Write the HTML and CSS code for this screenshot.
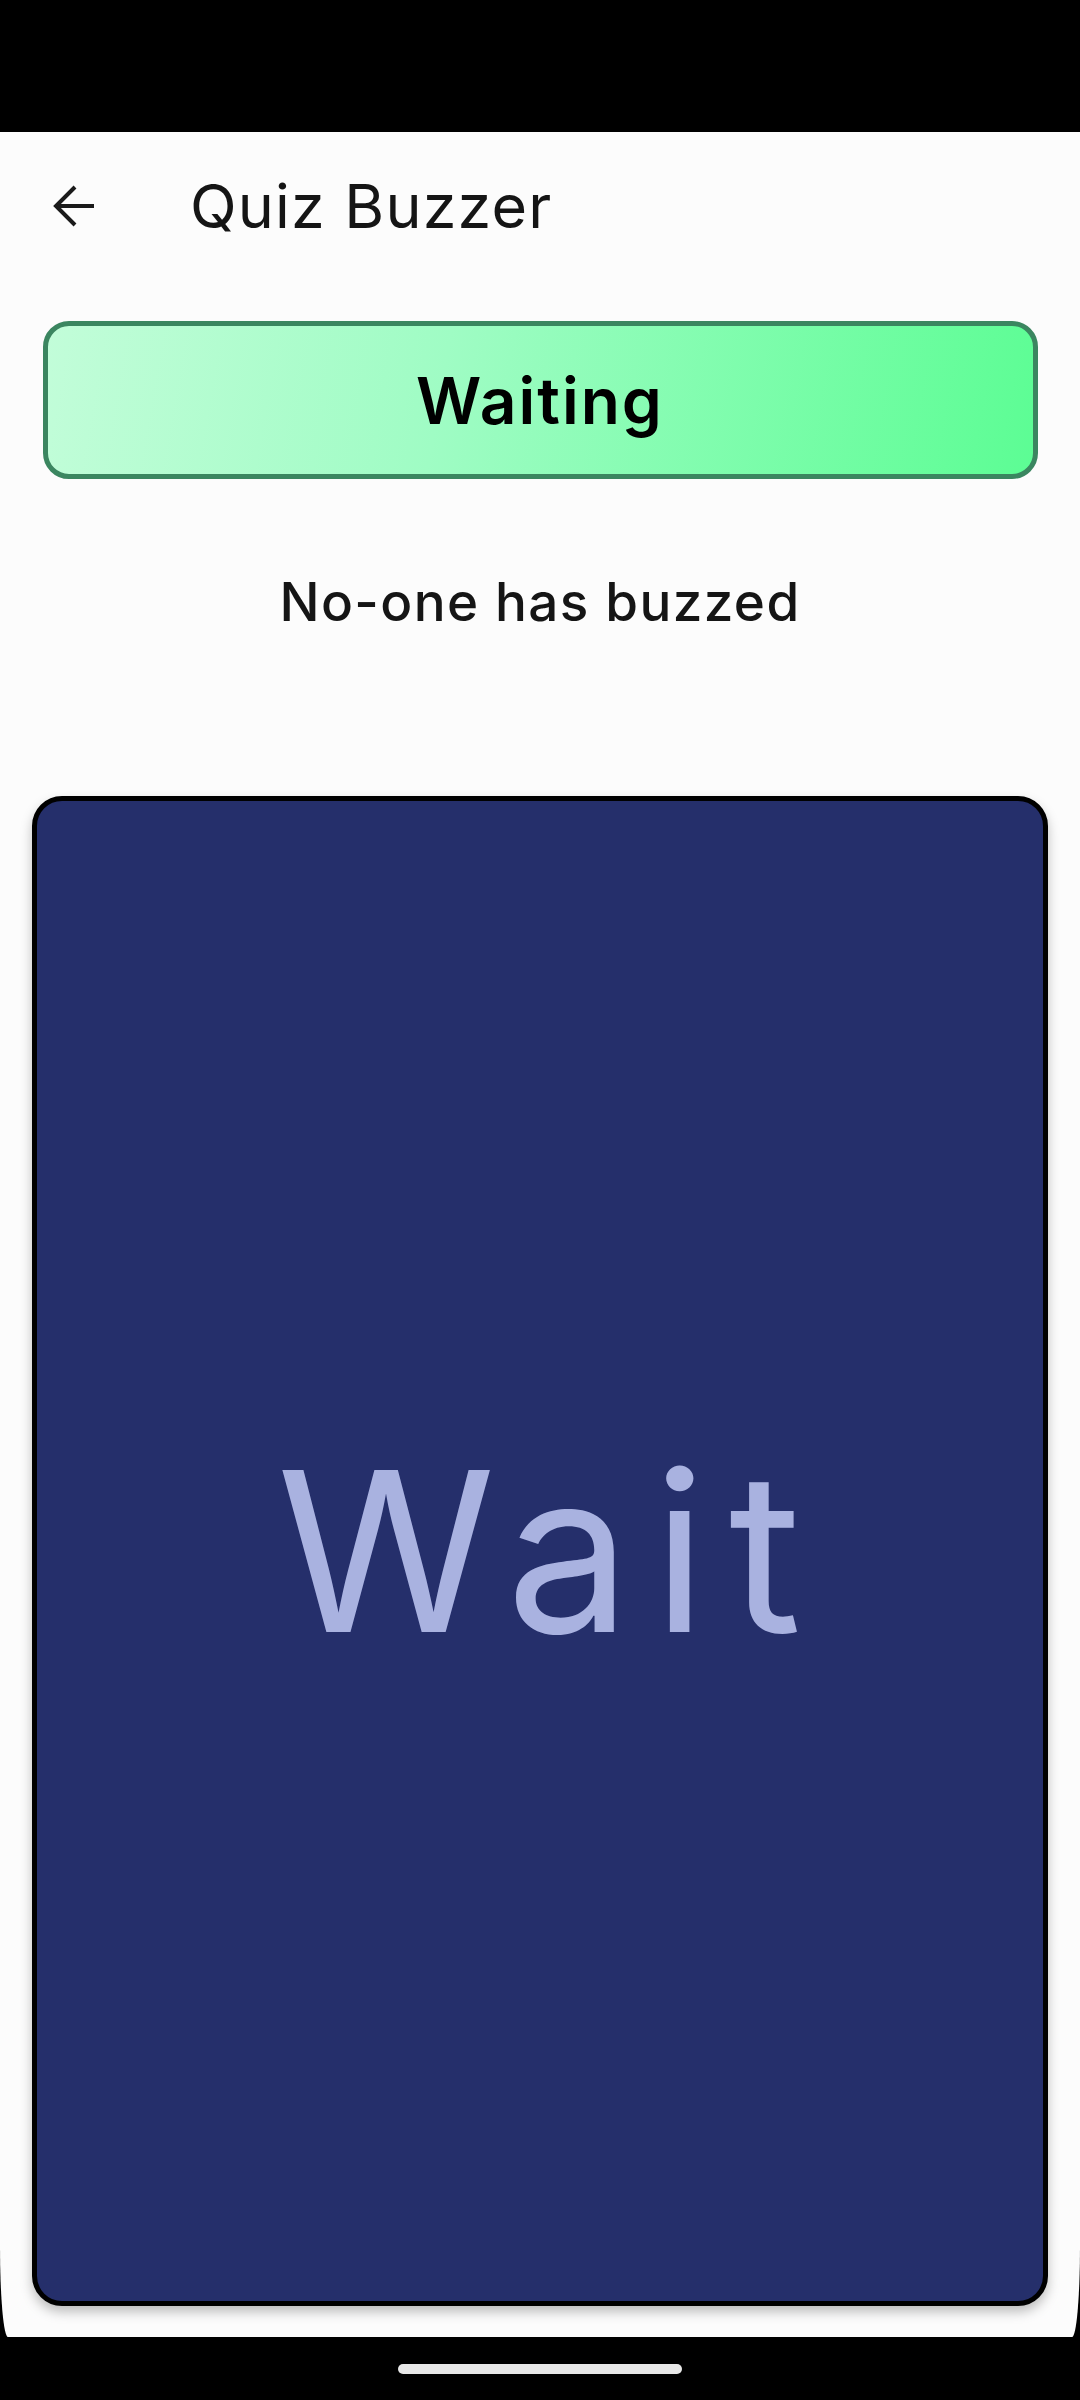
FILE: index.html
```html
<!DOCTYPE html>
<html lang="en">

    <head>
        <meta charset="UTF-8">
        <meta name="viewport" content="width=device-width, initial-scale=1.0">
        <title>Quiz Buzzer</title>
        <link rel="stylesheet" href="styles.css">
    </head>

    <body>
        <div class="status-bar"></div>

        <div class="screen">
            <header class="app-bar">
                <button class="btn-back" aria-label="Back">
                    <svg width="42" height="42" viewBox="0 0 42 42">
                        <path d="M41 21H3M22 2L3 21L22 40" fill="none" stroke="#1a1a1a" stroke-width="4" />
                    </svg>
                </button>
                <h1 class="title">Quiz Buzzer</h1>
            </header>

            <main class="content">
                <div class="status-pill">Waiting</div>

                <p class="buzz-info">No-one has buzzed</p>

                <button class="buzzer">Wait</button>
            </main>
        </div>

        <div class="nav-bar">
            <span class="home-indicator"></span>
        </div>
    </body>

</html>
```

FILE: styles.css
```css
:root {
    --page: #fcfcfc;
    --text-main: #151515;
    --pill-border: #3b8660;
    --buzzer-bg: #252f6b;
    --buzzer-text: #a9b2e0;
}

* {
    box-sizing: border-box;
    margin: 0;
    padding: 0;
    font-family: 'Inter', 'Noto Sans', sans-serif;
}

body {
    background: #000;
    width: 1080px;
    height: 2400px;
    overflow: hidden;
}

.status-bar {
    height: 132px;
    background: #000;
}

.screen {
    height: 2205px;
    background: var(--page);
    border-bottom-left-radius: 8px 90px;
    border-bottom-right-radius: 8px 90px;
    display: flex;
    flex-direction: column;
}

.app-bar {
    height: 147px;
    display: flex;
    align-items: center;
    padding-left: 53px;
}

.btn-back {
    width: 42px;
    height: 42px;
    border: none;
    background: none;
    display: flex;
    margin-right: 95px;
}

.title {
    font-size: 61px;
    font-weight: 400;
    color: var(--text-main);
    letter-spacing: 1.2px;
}

.content {
    flex: 1;
    display: flex;
    flex-direction: column;
    align-items: center;
    padding: 42px 32px 31px;
}

.status-pill {
    width: 995px;
    height: 158px;
    border: 5px solid var(--pill-border);
    border-radius: 26px;
    background: linear-gradient(100deg, #c2fdd9 0%, #9ffcc4 40%, #5cfd94 100%);
    display: flex;
    align-items: center;
    justify-content: center;
    font-size: 64px;
    font-weight: 600;
    letter-spacing: 2px;
    color: #000;
}

.buzz-info {
    margin-top: 100px;
    height: 46px;
    line-height: 46px;
    font-size: 53px;
    font-weight: 500;
    letter-spacing: 1.4px;
    color: var(--text-main);
}

.buzzer {
    margin-top: 171px;
    width: 1016px;
    flex: 1;
    background: var(--buzzer-bg);
    border: 5px solid #000;
    border-radius: 30px;
    box-shadow: 0 6px 12px rgba(0, 0, 0, 0.25);
    color: var(--buzzer-text);
    font-size: 222px;
    font-weight: 400;
    letter-spacing: 22px;
    padding-left: 20px;
    cursor: pointer;
}

.nav-bar {
    height: 63px;
    display: flex;
    justify-content: center;
    padding-top: 27px;
}

.home-indicator {
    width: 284px;
    height: 10px;
    border-radius: 5px;
    background: #e8e8e8;
}
```
